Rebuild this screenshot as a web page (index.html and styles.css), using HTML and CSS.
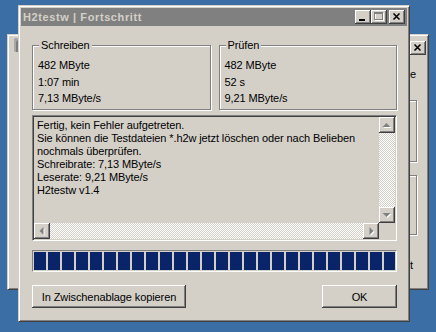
FILE: index.html
```html
<!DOCTYPE html>
<html lang="de">
<head>
    <meta charset="UTF-8">
    <meta name="viewport" content="width=device-width, initial-scale=1.0">
    <title>H2testw | Fortschritt</title>
    <link rel="stylesheet" href="styles.css">
</head>
<body>
    <div class="desktop">
        <!-- main window of h2testw, mostly hidden -->
        <div class="window back-window">
            <div class="back-title">
                <span class="back-icon"></span>
                <span class="caption-btn">
                    <svg width="16" height="14" viewBox="0 0 16 14"><path d="M4.5 3.5 L10.5 9.5 M10.5 3.5 L4.5 9.5" stroke="#000" stroke-width="1.6"/></svg>
                </span>
            </div>
            <div class="back-body">
                <div class="back-strip">
                    <span class="back-e">e</span>
                    <div class="back-box box-one"></div>
                    <div class="back-box box-two"></div>
                    <span class="back-t">t</span>
                </div>
            </div>
        </div>

        <!-- progress dialog -->
        <div class="window dialog">
            <div class="titlebar">
                <span class="title">H2testw | Fortschritt</span>
                <div class="caption-buttons">
                    <span class="caption-btn">
                        <svg width="16" height="14" viewBox="0 0 16 14"><rect x="4" y="9" width="6" height="2" fill="#000"/></svg>
                    </span>
                    <span class="caption-btn">
                        <svg width="16" height="14" viewBox="0 0 16 14">
                            <rect x="4.5" y="3.5" width="8" height="7" fill="none" stroke="#fff"/>
                            <rect x="3.5" y="2.5" width="8" height="7" fill="none" stroke="#808080"/>
                            <rect x="3" y="2" width="9" height="2" fill="#808080"/>
                        </svg>
                    </span>
                    <span class="caption-btn close-btn">
                        <svg width="16" height="14" viewBox="0 0 16 14"><path d="M4.5 3.5 L10.5 9.5 M10.5 3.5 L4.5 9.5" stroke="#000" stroke-width="1.6"/></svg>
                    </span>
                </div>
            </div>

            <div class="content">
                <div class="groups">
                    <div class="group">
                        <span class="group-label">Schreiben</span>
                        <div>482 MByte</div>
                        <div>1:07 min</div>
                        <div>7,13 MByte/s</div>
                    </div>
                    <div class="group">
                        <span class="group-label">Prüfen</span>
                        <div>482 MByte</div>
                        <div>52 s</div>
                        <div>9,21 MByte/s</div>
                    </div>
                </div>

                <div class="log">
                    <div class="log-text">
                        <div>Fertig, kein Fehler aufgetreten.</div>
                        <div>Sie können die Testdateien *.h2w jetzt löschen oder nach Belieben</div>
                        <div>nochmals überprüfen.</div>
                        <div>Schreibrate: 7,13 MByte/s</div>
                        <div>Leserate: 9,21 MByte/s</div>
                        <div>H2testw v1.4</div>
                    </div>
                    <div class="vscroll">
                        <span class="scroll-btn">
                            <svg width="16" height="16" viewBox="0 0 16 16">
                                <polygon points="4.5,11 8.5,7 12.5,11" fill="#fff"/>
                                <polygon points="3.5,10 7.5,6 11.5,10" fill="#808080"/>
                            </svg>
                        </span>
                        <span class="scroll-btn">
                            <svg width="16" height="16" viewBox="0 0 16 16">
                                <polygon points="4.5,7 12.5,7 8.5,11" fill="#fff"/>
                                <polygon points="3.5,6 11.5,6 7.5,10" fill="#808080"/>
                            </svg>
                        </span>
                    </div>
                    <div class="hscroll">
                        <span class="scroll-btn">
                            <svg width="16" height="16" viewBox="0 0 16 16">
                                <polygon points="10.5,5 6.5,9 10.5,13" fill="#fff"/>
                                <polygon points="9.5,4 5.5,8 9.5,12" fill="#808080"/>
                            </svg>
                        </span>
                        <span class="scroll-btn">
                            <svg width="16" height="16" viewBox="0 0 16 16">
                                <polygon points="7.5,5 11.5,9 7.5,13" fill="#fff"/>
                                <polygon points="6.5,4 10.5,8 6.5,12" fill="#808080"/>
                            </svg>
                        </span>
                    </div>
                    <div class="corner"></div>
                </div>

                <div class="progress">
                    <div class="progress-fill"></div>
                </div>

                <div class="buttons">
                    <button class="btn copy-btn">In Zwischenablage kopieren</button>
                    <button class="btn ok-btn">OK</button>
                </div>
            </div>
        </div>
    </div>
</body>
</html>
```

FILE: styles.css
```css
body {
    margin: 0;
    width: 436px;
    height: 332px;
    overflow: hidden;
    background-color: #3a6ea5;
    font-family: "Liberation Sans", Arial, sans-serif;
    font-size: 11px;
    letter-spacing: -0.1px;
    color: #000;
}

.desktop {
    position: relative;
    width: 436px;
    height: 332px;
}

/* classic raised window frame */
.window {
    position: absolute;
    box-sizing: border-box;
    display: flex;
    flex-direction: column;
    padding: 2px;
    background-color: #d4d0c8;
    border: 1px solid;
    border-color: #d4d0c8 #404040 #404040 #d4d0c8;
    box-shadow: inset 1px 1px 0 #fff, inset -1px -1px 0 #808080;
}

.back-window {
    left: 7px;
    top: 34px;
    width: 422px;
    height: 256px;
}

.dialog {
    left: 18px;
    top: 5px;
    width: 392px;
    height: 317px;
}

.caption-btn {
    display: block;
    width: 16px;
    height: 14px;
    background-color: #d4d0c8;
    box-shadow: inset -1px -1px 0 #404040, inset 1px 1px 0 #fff, inset -2px -2px 0 #808080;
}

.caption-btn svg {
    display: block;
}

/* back window */
.back-title {
    display: flex;
    justify-content: space-between;
    align-items: flex-start;
}

.back-icon {
    width: 10px;
    height: 14px;
    margin: 1px 0 0 4px;
    border-radius: 3px;
    background-color: #7c7c7c;
    box-shadow: inset 2px 2px 0 #a8a8a8;
}

.back-title .caption-btn {
    margin-top: 4px;
}

.back-body {
    flex: 1;
    display: flex;
    justify-content: flex-end;
    padding-right: 9px;
}

.back-strip {
    display: flex;
    flex-direction: column;
    align-items: flex-end;
    width: 30px;
    line-height: 13px;
}

.back-e {
    margin-top: 13px;
    margin-right: 1px;
}

.back-box {
    width: 30px;
    box-sizing: border-box;
    border: 1px solid #808080;
    box-shadow: inset 1px 1px 0 #fff, 1px 1px 0 #fff;
}

.box-one {
    margin-top: 19px;
    height: 62px;
}

.box-two {
    margin-top: 13px;
    height: 60px;
}

.back-t {
    margin-top: 24px;
    margin-right: 4px;
}

/* dialog */
.titlebar {
    height: 18px;
    display: flex;
    justify-content: space-between;
    align-items: center;
    padding: 0 2px;
    background-color: #808080;
}

.title {
    color: #d4d0c8;
    font-weight: bold;
    letter-spacing: 0.6px;
}

.caption-buttons {
    display: flex;
}

.close-btn {
    margin-left: 2px;
}

.content {
    flex: 1;
    display: flex;
    flex-direction: column;
    padding: 19px 10px 0 11px;
}

.groups {
    display: grid;
    grid-template-columns: 1fr 1fr;
    gap: 8px;
    height: 65px;
}

.group {
    position: relative;
    border: 1px solid #808080;
    box-shadow: inset 1px 1px 0 #fff, 1px 1px 0 #fff;
    padding: 11px 5px 0;
    line-height: 16.5px;
}

.group-label {
    position: absolute;
    top: -7px;
    left: 6px;
    padding: 0 2px;
    line-height: 13px;
    background-color: #d4d0c8;
}

.log {
    margin-top: 5px;
    height: 126px;
    box-sizing: border-box;
    display: grid;
    grid-template-columns: 1fr 16px;
    grid-template-rows: 1fr 16px;
    padding: 1px;
    border: 1px solid;
    border-color: #808080 #fff #fff #808080;
    box-shadow: inset 1px 1px 0 #404040;
}

.log-text {
    padding: 2px 3px;
    line-height: 13px;
    white-space: nowrap;
    overflow: hidden;
}

.vscroll,
.hscroll {
    display: flex;
    justify-content: space-between;
    background-color: #d4d0c8;
    background-image: conic-gradient(#fff 25%, transparent 0 50%, #fff 0 75%, transparent 0);
    background-size: 2px 2px;
}

.vscroll {
    flex-direction: column;
}

.scroll-btn {
    display: block;
    width: 16px;
    height: 16px;
    background-color: #d4d0c8;
    box-shadow: inset -1px -1px 0 #404040, inset 1px 1px 0 #fff, inset -2px -2px 0 #808080;
}

.scroll-btn svg {
    display: block;
}

.corner {
    background-color: #d4d0c8;
}

.progress {
    margin-top: 9px;
    height: 22px;
    box-sizing: border-box;
    padding: 1px;
    border: 1px solid;
    border-color: #808080 #fff #fff #808080;
}

.progress-fill {
    height: 100%;
    background: repeating-linear-gradient(90deg, #0a246a 0 12px, transparent 12px 14px);
}

.buttons {
    margin-top: 13px;
    display: flex;
    justify-content: space-between;
}

.btn {
    height: 23px;
    padding: 0;
    border: none;
    background-color: #d4d0c8;
    font: inherit;
    letter-spacing: inherit;
    color: #000;
    box-shadow: inset -1px -1px 0 #404040, inset 1px 1px 0 #fff, inset -2px -2px 0 #808080;
}

.copy-btn {
    width: 154px;
}

.ok-btn {
    width: 75px;
}
```
